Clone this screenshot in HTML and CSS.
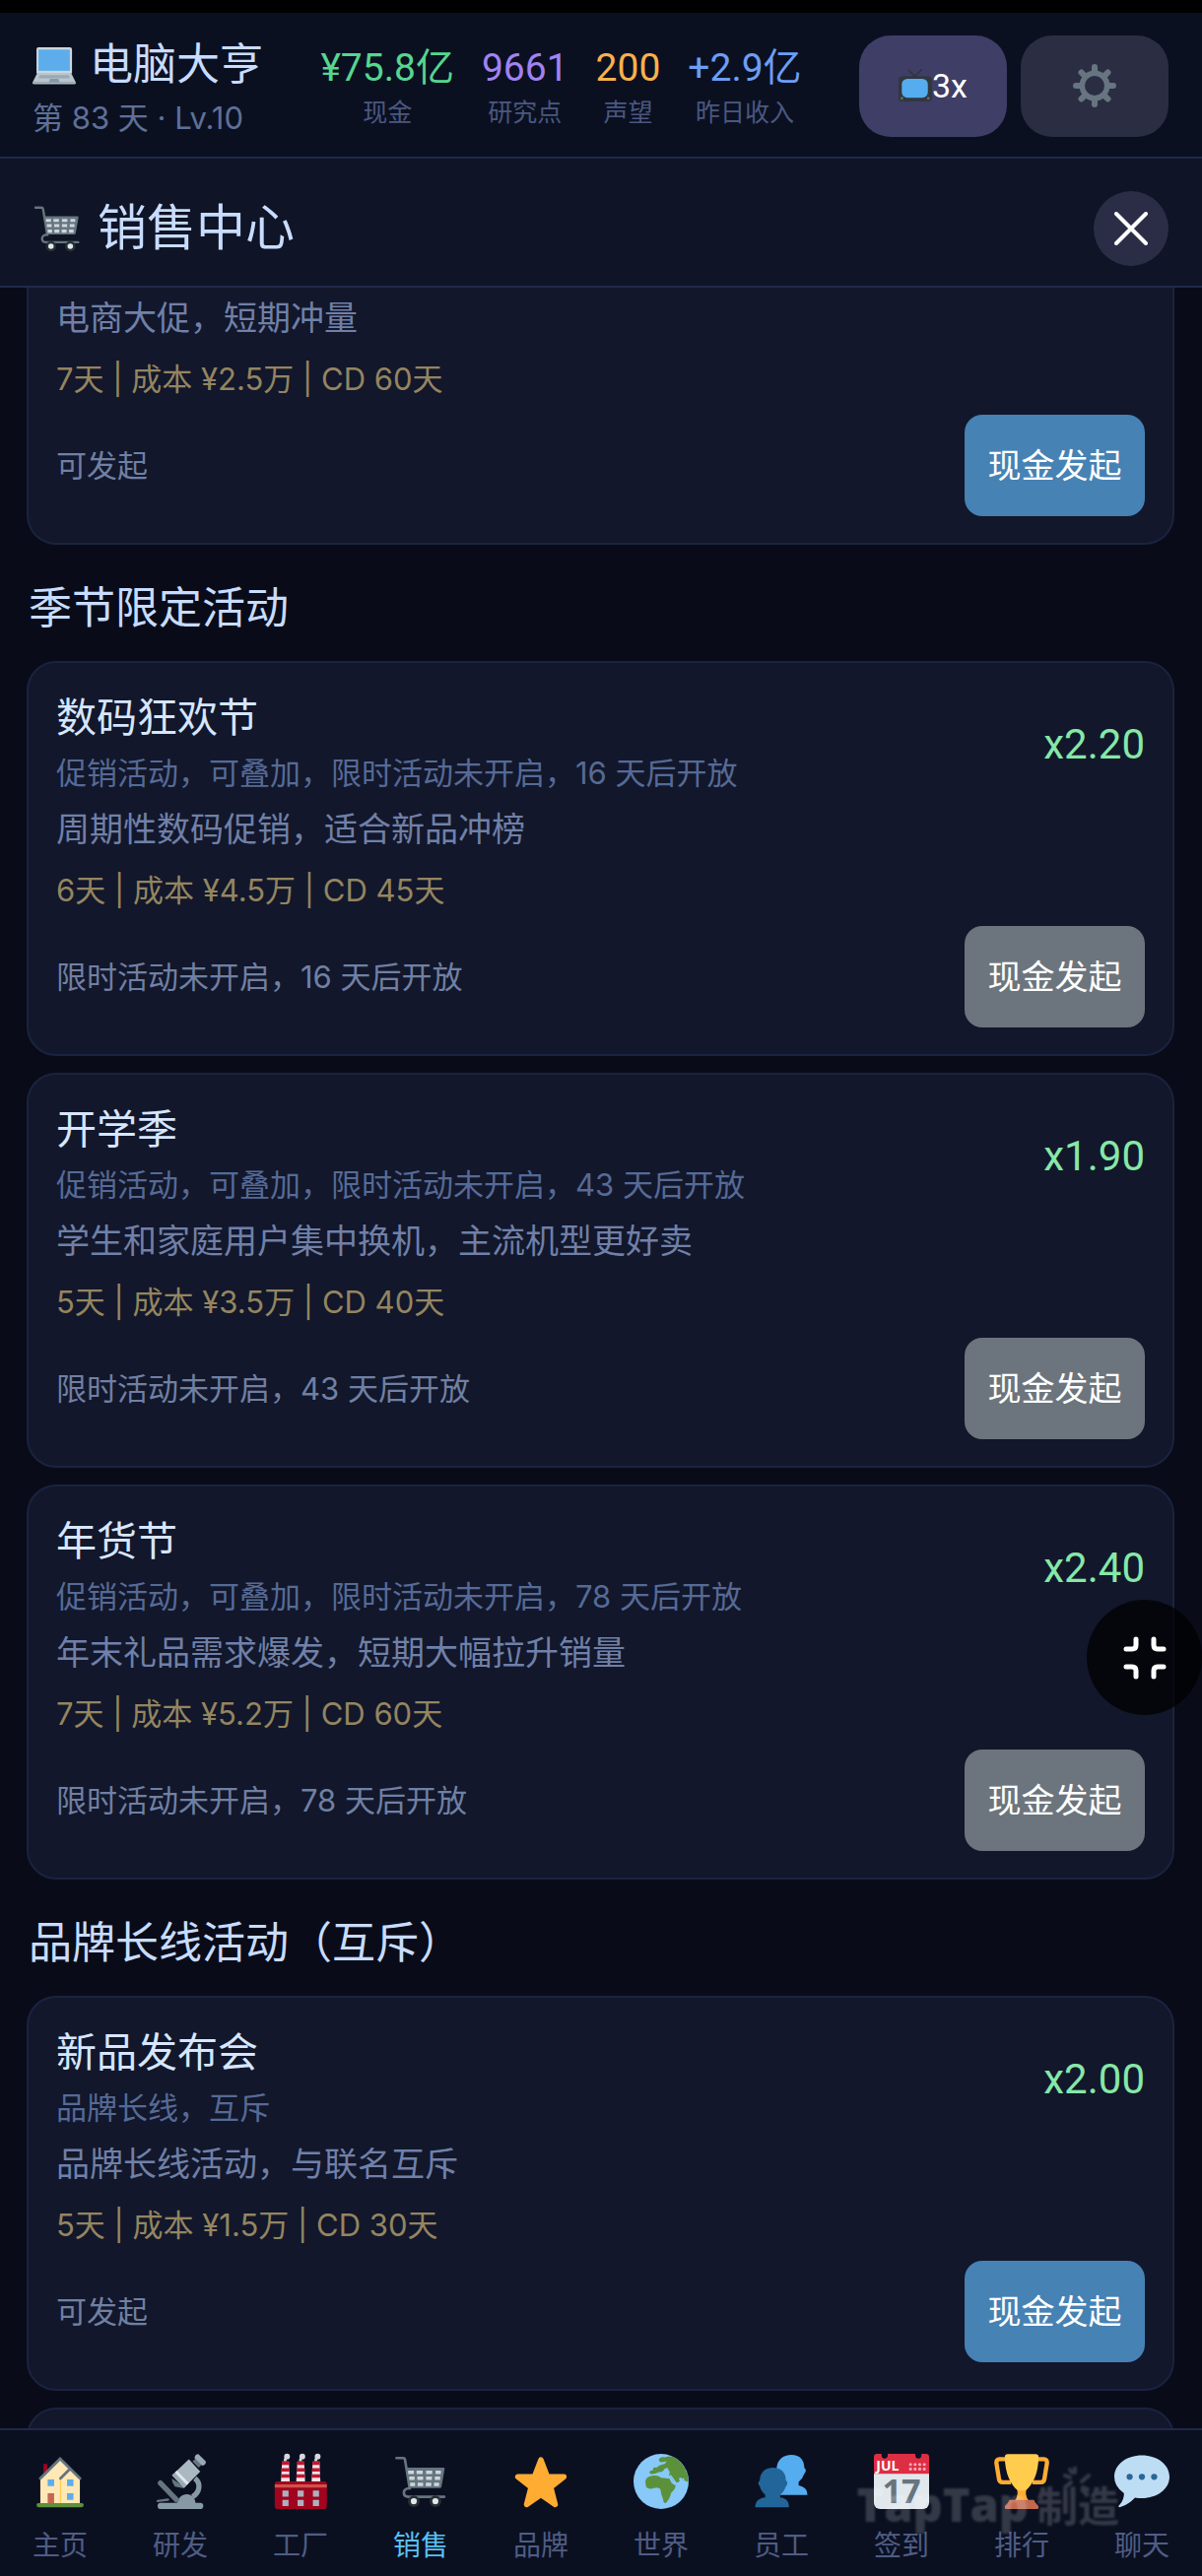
FILE: index.html
```html
<!DOCTYPE html>
<html lang="zh-CN">
<head>
  <meta charset="UTF-8">
  <meta name="viewport" content="width=device-width, initial-scale=1">
  <title>电脑大亨</title>
  <link rel="stylesheet" href="styles.css">
</head>
<body>

  <svg class="sprite" aria-hidden="true">
    <symbol id="cart" viewBox="0 0 36 36">
      <path d="M2.200 2.700H6.600Q7.500 2.700 7.700 3.600L10.800 22.500C7.500 22.500 7 24.500 7 25.300C7 27 8.200 28 10 28H33.400" fill="none" stroke="#66757f" stroke-width="1.700" stroke-linecap="round"/>
      <path d="M8.600 9H33Q33.800 9 33.600 10L31.600 21.300Q31.400 22.400 30.300 22.400H10.600Z" fill="#66757f"/>
      <path d="M9.800 12h3.700M15.300 12h4M21.500 12h4M27.700 12h3.500M10.500 15.900h3.500M15.800 15.900h3.800M21.500 15.900h3.800M27.200 15.900h3.500M11.100 19.900h3.200M16 19.900h3.600M21.300 19.900h3.600M26.700 19.900h3.300" stroke="#ccd6dd" stroke-width="2.200"/>
      <g fill="#292f33"><circle cx="13.500" cy="30.900" r="3.800"/><circle cx="27.600" cy="30.900" r="3.800"/></g>
      <g fill="#e1e8ed"><circle cx="13.500" cy="30.900" r="2"/><circle cx="27.600" cy="30.900" r="2"/></g>
    </symbol>
  </svg>

  <div class="statusbar"></div>

  <header class="topbar">
    <div class="brand">
      <div class="brand-name">
        <svg class="icon-laptop" viewBox="0 0 36 36">
          <path d="M5 3.300H31Q32.800 3.300 32.800 5V25H3.300V5Q3.300 3.300 5 3.300Z" fill="#ccd6dd"/>
          <path d="M5 5.200H31V22.800H5Z" fill="#5dadec"/>
          <path d="M4 24.500H32L36 32.500H0Z" fill="#b8c5cd"/>
          <path d="M0 32.300H36V33Q35.800 34 34.500 34H1.500Q.2 34 0 33Z" fill="#aab8c2"/>
          <path d="M6 26.300H30L31 29H5Z" fill="#9aaab4"/>
          <path d="M14.500 29.500H21.500L22.500 32.500H13.500Z" fill="#8899a6"/>
        </svg>
        <span>电脑大亨</span>
      </div>
      <div class="brand-sub">第 83 天 · Lv.10</div>
    </div>

    <div class="stats">
      <div class="stat"><b class="cash">¥75.8亿</b><span>现金</span></div>
      <div class="stat"><b class="research">9661</b><span>研究点</span></div>
      <div class="stat"><b class="fame">200</b><span>声望</span></div>
      <div class="stat"><b class="income">+2.9亿</b><span>昨日收入</span></div>
    </div>

    <div class="tools">
      <button class="tool speed" type="button">
        <svg class="icon-tv" viewBox="0 0 36 36">
          <path d="M11 1.500L17.500 8L24.500 1" fill="none" stroke="#31373d" stroke-width="2" stroke-linecap="round"/>
          <rect y="8" width="36" height="27" rx="4" fill="#31373d"/>
          <rect x="3.500" y="10.500" width="28" height="20.500" rx="6" fill="#55acee"/>
          <circle cx="3.600" cy="31.500" r="1.400" fill="#66757f"/><circle cx="32" cy="31.500" r="1.400" fill="#66757f"/>
        </svg>3x</button>
      <button class="tool" type="button" aria-label="设置">
        <svg class="icon-gear" viewBox="0 0 36 36" fill="none" stroke="#66757f">
          <circle cx="18" cy="18" r="10.400" stroke-width="4.500"/>
          <path d="M18 2.500V6M18 30v3.500M2.500 18H6M30 18h3.500M7 7l2.500 2.500M26.500 26.500L29 29M29 7l-2.500 2.500M9.500 26.500L7 29" stroke-width="5" stroke-linecap="round"/>
        </svg>
      </button>
    </div>
  </header>

  <div class="panel-head">
    <svg class="icon-cart"><use href="#cart"/></svg>
    <h1>销售中心</h1>
    <button class="close" type="button" aria-label="关闭">
      <svg viewBox="0 0 34 34"><path d="M2 2L32 32M32 2L2 32" stroke="#fff" stroke-width="4" stroke-linecap="round"/></svg>
    </button>
  </div>

  <main>
    <article class="card card-scrolled">
      <p class="desc">电商大促，短期冲量</p>
      <p class="cost">7天 | 成本 ¥2.5万 | CD 60天</p>
      <div class="action"><span>可发起</span><button class="launch" type="button">现金发起</button></div>
    </article>

    <h2>季节限定活动</h2>

    <article class="card">
      <div class="card-head">
        <div>
          <h3>数码狂欢节</h3>
          <p class="tags">促销活动，可叠加，限时活动未开启，16 天后开放</p>
        </div>
        <strong>x2.20</strong>
      </div>
      <p class="desc">周期性数码促销，适合新品冲榜</p>
      <p class="cost">6天 | 成本 ¥4.5万 | CD 45天</p>
      <div class="action"><span>限时活动未开启，16 天后开放</span><button class="launch" type="button" disabled>现金发起</button></div>
    </article>

    <article class="card">
      <div class="card-head">
        <div>
          <h3>开学季</h3>
          <p class="tags">促销活动，可叠加，限时活动未开启，43 天后开放</p>
        </div>
        <strong>x1.90</strong>
      </div>
      <p class="desc">学生和家庭用户集中换机，主流机型更好卖</p>
      <p class="cost">5天 | 成本 ¥3.5万 | CD 40天</p>
      <div class="action"><span>限时活动未开启，43 天后开放</span><button class="launch" type="button" disabled>现金发起</button></div>
    </article>

    <article class="card">
      <div class="card-head">
        <div>
          <h3>年货节</h3>
          <p class="tags">促销活动，可叠加，限时活动未开启，78 天后开放</p>
        </div>
        <strong>x2.40</strong>
      </div>
      <p class="desc">年末礼品需求爆发，短期大幅拉升销量</p>
      <p class="cost">7天 | 成本 ¥5.2万 | CD 60天</p>
      <div class="action"><span>限时活动未开启，78 天后开放</span><button class="launch" type="button" disabled>现金发起</button></div>
    </article>

    <h2>品牌长线活动（互斥）</h2>

    <article class="card">
      <div class="card-head">
        <div>
          <h3>新品发布会</h3>
          <p class="tags">品牌长线，互斥</p>
        </div>
        <strong>x2.00</strong>
      </div>
      <p class="desc">品牌长线活动，与联名互斥</p>
      <p class="cost">5天 | 成本 ¥1.5万 | CD 30天</p>
      <div class="action"><span>可发起</span><button class="launch" type="button">现金发起</button></div>
    </article>

    <article class="card"></article>
  </main>

  <nav>
    <a href="#home">
      <svg viewBox="0 0 36 36">
        <path d="M7.100 6.600H9.700V14H7.100Z" fill="#a0041e"/>
        <path d="M5.100 16L18 3L30.900 16V32.500H5.100Z" fill="#ffe8b6"/>
        <path d="M18.300 17V32" stroke="#ffcc4d" stroke-width=".8"/>
        <path d="M5.100 16.100L18 3.200L31 16.100M18.200 16.100L24.300 10" fill="none" stroke="#66757f" stroke-width="1.800" stroke-linecap="round"/>
        <path d="M9.900 16.700h4.200V21H9.900ZM22.500 16.700h4.200V21h-4.200ZM22.500 25.700h4.200V30h-4.200Z" fill="#5dadec"/>
        <path d="M9.900 25.700h4.200v6.500H9.900Z" fill="#c1694f"/>
        <rect x="2.600" y="32.100" width="30.800" height="2.700" rx="1.300" fill="#5c913b"/>
      </svg>
      <span>主页</span>
    </a>
    <a href="#research">
      <svg viewBox="0 0 36 36">
        <path d="M27.500 16C31.500 19 31 25 26 28" fill="none" stroke="#8899a6" stroke-width="3.400"/>
        <path d="M16 33C16 29 19 26.300 22.300 26.300S28 29 28 33Z" fill="#8899a6"/>
        <rect x="3.200" y="32" width="29.800" height="4" rx="2" fill="#8899a6"/>
        <path d="M5 19L15.500 30" stroke="#66757f" stroke-width="3.400" stroke-linecap="round"/>
        <path d="M3.200 30.800L10 29.900" stroke="#66757f" stroke-width="1.500" stroke-linecap="round"/>
        <path d="M12.500 16L20.500 21.500L19.500 22.300L14.500 21.300Q12.500 19 12.500 16Z" fill="#66757f"/>
        <path d="M26 5L30 9L32 7L28 3Z" fill="#66757f"/>
        <path d="M27.300 2.700Q27.600 .2 29.800 .2L34.700 5Q34.700 7.500 32.300 7.700Z" fill="#9aaab4"/>
        <path d="M23.600 3.600L31 11.600L20.400 22.300L12.600 14Z" fill="#aab8c2"/>
        <path d="M12.600 14L14 12.600L21.800 20.800L20.400 22.300Z" fill="#99aab5"/>
        <path d="M14.500 12.100L15.800 10.900L23.600 19L22.300 20.300Z" fill="#e1e8ed"/>
      </svg>
      <span>研发</span>
    </a>
    <a href="#factory">
      <svg viewBox="0 0 36 36">
        <g fill="#f5dfe4"><path d="M6 5H10.400L11 18.500H5.200ZM16 5H20.400L21 18.500H15.200ZM26 5H30.400L31 18.500H25.200Z"/></g>
        <path d="M5.800 6.200h4.800M15.800 6.200h4.800M25.800 6.200h4.800M5.500 10.400h5.300M15.500 10.400h5.300M25.500 10.400h5.300M5.300 14.500h5.600M15.300 14.500h5.600M25.300 14.500h5.600" stroke="#be1931" stroke-width="2.200"/>
        <g fill="#d5d9de"><circle cx="9.200" cy="1.800" r="1.900"/><circle cx="8" cy="3.800" r="1"/><circle cx="19.200" cy="1.800" r="1.900"/><circle cx="18" cy="3.800" r="1"/><circle cx="29.200" cy="1.800" r="1.900"/><circle cx="28" cy="3.800" r="1"/></g>
        <rect x="1.200" y="18" width="34" height="18" rx="2" fill="#a0041e"/>
        <path d="M1.200 20H35.200V22H1.200Z" fill="#d1514a"/>
        <path d="M6.200 24H10.200V28H6.200ZM16.100 24h4v4h-4ZM26.100 24h4v4h-4ZM6.200 30H10.200V34H6.200ZM16.100 30h4v4h-4ZM26.100 30h4v4h-4Z" fill="#aeb0bf"/>
      </svg>
      <span>工厂</span>
    </a>
    <a href="#sales" class="active">
      <svg><use href="#cart"/></svg>
      <span>销售</span>
    </a>
    <a href="#brand">
      <svg viewBox="0 0 36 36">
        <path d="M18 4L22.200 15H33L24.400 21.800L27.300 33L18 26.600L8.700 33L11.600 21.800L3 15H13.800Z" fill="#ffac33" stroke="#ffac33" stroke-width="3.600" stroke-linejoin="round"/>
      </svg>
      <span>品牌</span>
    </a>
    <a href="#world">
      <svg viewBox="0 0 36 36">
        <circle cx="18" cy="18" r="18" fill="#88c9f9"/>
        <path d="M7.700 17.800Q8.500 14.800 11 14.600Q14 13.700 16.800 14.800Q18 16 20 15.800L23.500 16.200Q24.500 19 26 20L27.500 20.500Q27.300 23 24.500 25.500Q24 29 21 32.100Q19.500 32.300 19.300 29.500Q17.800 26 17.500 23Q16 21.500 13.500 22.300Q10 23.500 8.200 21.500Z" fill="#5c913b"/>
        <path d="M16.500 3.500Q17.500 1.800 20.500 2.200Q25 .8 28 3Q35.500 8.500 35.900 18.500Q33 18 31 15.500L29.500 16Q31 18 28.500 19.300Q26.500 19 24.500 15.500Q22.500 13.800 23.700 12L22 9L20 10Q19.500 12 17 11.800Q14 13.500 11 13Q9 11.500 13 10.500Q12 8.500 15 9L17 7.500L20.500 6.500L21.500 4.800L18.500 5.500Q16.500 5.500 16.500 3.500Z" fill="#5c913b"/>
        <path d="M24 14L28 19.500Q31 18.500 33 16" fill="none" stroke="#88c9f9" stroke-width="1"/>
      </svg>
      <span>世界</span>
    </a>
    <a href="#staff">
      <svg viewBox="0 0 36 36">
        <path d="M24.700 .7C30 .7 33 4 33 9Q35 10.800 33 13Q31.800 16.500 29.300 18.300V20.500C33.500 21.500 35 23.500 35 26.800H15V9C15.500 4 19 .7 24.700 .7Z" fill="#55acee"/>
        <path d="M12.500 9C18 9 21 12.300 21 17.300Q23 19 21 21.200Q19.800 24.800 17.300 26.600V28.500C21.500 29 23 31.300 23 34.800H1C1 31.300 3 29 7.500 28.500V26.600Q5 24.800 4 21.200Q2 19 4 17.300C4 12.300 7.500 9 12.500 9Z" fill="#269"/>
      </svg>
      <span>员工</span>
    </a>
    <a href="#signin">
      <svg viewBox="0 0 36 36">
        <rect width="36" height="36" rx="4" fill="#e1e8ed"/>
        <path d="M2 0H34Q36 0 36 2V13H0V2Q0 0 2 0Z" fill="#dd2e44"/>
        <path d="M5 0H9V1A2 2 0 0 1 5 1ZM27 0H31V1A2 2 0 0 1 27 1Z" fill="#0b1021"/>
        <g fill="#f4abba"><circle cx="23.900" cy="6.900" r="1"/><circle cx="26.900" cy="6.900" r="1"/><circle cx="29.900" cy="6.900" r="1"/><circle cx="32.900" cy="6.900" r="1"/><circle cx="23.900" cy="9.900" r="1"/><circle cx="26.900" cy="9.900" r="1"/><circle cx="29.900" cy="9.900" r="1"/><circle cx="32.900" cy="9.900" r="1"/></g>
        <text x="1.500" y="11" class="cal-month">JUL</text>
        <text x="18" y="32" class="cal-day">17</text>
      </svg>
      <span>签到</span>
    </a>
    <a href="#rank">
      <svg viewBox="0 0 36 36">
        <path d="M8 3.500H3.500Q1.400 3.500 1.500 6L3.200 16.500Q3.500 18.600 5.500 18.600H11M28 3.500H32.500Q34.600 3.500 34.500 6L32.800 16.500Q32.500 18.600 30.500 18.600H25" fill="none" stroke="#ffac33" stroke-width="2.800"/>
        <path d="M15 22H21L20.700 26Q21 29 23 31H13Q15 29 15.300 26Z" fill="#ffac33"/>
        <path d="M7 2Q7 .2 9 .2H27Q29 .2 29 2C29 13 25 20.500 20.500 24H15.500C11 20.500 7 13 7 2Z" fill="#ffcc4d"/>
        <path d="M10 30H26Q27 32.500 29 34V35Q29 36 28 36H8Q7 36 7 35V34Q9 32.500 10 30Z" fill="#c1694f"/>
      </svg>
      <span>排行</span>
    </a>
    <a href="#chat">
      <svg viewBox="0 0 36 36">
        <path d="M18 1C28 1 36 7 36 15S28 29 18 29Q15.500 29 13.500 28.600Q9 33.500 3.500 34.800Q2.300 34.800 3 33.700Q6.500 30 6.300 25.700Q0 21.500 0 15C0 7 8 1 18 1Z" fill="#bdddf4"/>
        <g fill="#2a6797"><circle cx="10" cy="15" r="2"/><circle cx="18" cy="15" r="2"/><circle cx="26" cy="15" r="2"/></g>
      </svg>
      <span>聊天</span>
    </a>
    <div class="watermark">
      <span>TapTap</span><span class="watermark-cn">制造</span>
      <svg viewBox="0 0 30 26"><path d="M13 1v5M3 9l5 2M8 3l2 3M27 9l-7 6M3 21l6-5M21 21l5 2" stroke="currentColor" stroke-width="4" stroke-linecap="round"/></svg>
    </div>
  </nav>

  <button class="fab" type="button" aria-label="退出全屏">
    <svg viewBox="0 0 44 44" fill="none" stroke="#fff" stroke-width="5" stroke-linecap="round"><path d="M13 3V9Q13 13 9 13H3M31 3V9Q31 13 35 13H41M3 31H9Q13 31 13 35V41M41 31H35Q31 31 31 35V41"/></svg>
  </button>

</body>
</html>
```

FILE: styles.css
```css
* {
  box-sizing: border-box;
}
body {
  margin: 0;
  height: 100vh;
  display: flex;
  flex-direction: column;
  background: #090c18;
  color: #c8dcff;
  font-family: Roboto, "Noto Sans CJK SC", sans-serif;
  overflow: hidden;
}
h1, h2, h3, p {
  margin: 0;
  font-weight: 400;
}
button {
  border: 0;
  padding: 0;
  color: #fff;
  font-family: inherit;
  font-size: 34px;
  line-height: 40px;
  display: flex;
  align-items: center;
  justify-content: center;
}
.sprite {
  display: none;
}
.statusbar {
  flex: none;
  height: 13px;
  background: #000;
}

/* top bar */
.topbar {
  flex: none;
  display: flex;
  align-items: center;
  padding: 22px 34px 20px 33px;
  background: #0b1021;
  border-bottom: 2px solid #1f2847;
}
.brand {
  padding-top: 8px;
}
.brand-name {
  display: flex;
  align-items: center;
  gap: 14px;
  margin-bottom: 12px;
  font-size: 44px;
  line-height: 46px;
}
.icon-laptop {
  width: 44px;
  height: 44px;
}
.brand-sub,
.tags,
.cost,
.action span {
  font-family: Inter, "Noto Sans CJK SC", sans-serif;
  font-size: 31px;
}
.brand-sub {
  line-height: 38px;
  color: #5f7098;
}
.stats {
  flex: 1;
  display: flex;
  justify-content: center;
  gap: 28px;
  padding-top: 5px;
}
.stat {
  text-align: center;
}
.stat b {
  display: block;
  font-size: 39px;
  font-weight: 400;
  line-height: 50px;
}
.stat span {
  display: block;
  font-size: 25px;
  line-height: 42px;
  color: #4a5880;
}
.cash { color: #56d68f; }
.research { color: #a083f2; }
.fame { color: #fbb04c; }
.income { color: #6b9ef5; }
.tools {
  display: flex;
  gap: 14px;
}
.tool {
  width: 150px;
  height: 103px;
  border-radius: 32px;
  background: #2b2d43;
}
.speed {
  background: #3f3e66;
}
.icon-tv {
  width: 34px;
  height: 34px;
}
.icon-gear {
  width: 44px;
  height: 44px;
}

/* panel title */
.panel-head {
  flex: none;
  display: flex;
  align-items: center;
  gap: 16px;
  padding: 33px 34px 20px 33px;
  background: #0f1426;
  border-bottom: 2px solid #212a49;
}
.panel-head h1 {
  flex: 1;
  font-size: 50px;
  line-height: 60px;
}
.icon-cart {
  width: 50px;
  height: 50px;
}
.close {
  width: 76px;
  height: 76px;
  border-radius: 50%;
  background: #2b2d47;
}
.close svg {
  width: 34px;
  height: 34px;
}

/* campaign list */
main {
  flex: 1;
  min-height: 0;
  overflow: hidden;
  padding: 0 28px 0 27px;
}
h2 {
  margin: 35px 2px 23px;
  font-size: 44px;
  line-height: 60px;
}
.card {
  min-height: 60px;
  padding: 26px 28px 27px;
  background: #12172b;
  border: 2px solid #1a2340;
  border-radius: 30px;
}
.card + .card {
  margin-top: 17px;
}
.card-scrolled {
  padding-top: 0;
  border-top: 0;
  border-radius: 0 0 30px 30px;
}
.card-head {
  display: flex;
  align-items: center;
  justify-content: space-between;
}
.card h3 {
  font-size: 41px;
  line-height: 60px;
  color: #d6e6ff;
}
.card strong {
  font-size: 42px;
  font-weight: 400;
  color: #86e8a8;
}
.card .tags {
  line-height: 52px;
  color: #566a96;
}
.desc {
  font-size: 34px;
  line-height: 62px;
  color: #7080a8;
}
.cost {
  margin-bottom: 5px;
  line-height: 62px;
  color: #948560;
}
.action {
  display: flex;
  align-items: center;
  justify-content: space-between;
  line-height: 40px;
  color: #7080a4;
}
.launch {
  width: 183px;
  height: 103px;
  border-radius: 18px;
  background: #4682b4;
}
.launch:disabled {
  background: #6c757d;
}

/* bottom navigation */
nav {
  flex: none;
  position: relative;
  display: grid;
  grid-template-columns: repeat(10, 1fr);
  height: 150px;
  padding-top: 24px;
  background: #0b1021;
  border-top: 2px solid #1f2847;
}
nav a {
  display: flex;
  flex-direction: column;
  align-items: center;
  gap: 18px;
  color: #4f5d84;
  font-size: 28px;
  line-height: 40px;
  text-decoration: none;
}
nav a.active {
  color: #5ac0f5;
}
nav a svg {
  width: 56px;
  height: 56px;
  overflow: visible;
}
.cal-month {
  font: 700 9px "Open Sans", sans-serif;
  fill: #fff;
}
.cal-day {
  font: 700 22px "Open Sans", sans-serif;
  fill: #66757f;
  text-anchor: middle;
}
.watermark {
  position: absolute;
  right: 84px;
  top: 45px;
  display: flex;
  align-items: center;
  gap: 8px;
  font: 800 47px/60px "Open Sans", sans-serif;
  color: #fff;
  opacity: .17;
  filter: blur(1px);
  pointer-events: none;
}
.watermark-cn {
  font: 700 42px/60px "Noto Sans CJK SC", sans-serif;
}
.watermark svg {
  position: absolute;
  right: 28px;
  top: -8px;
  width: 30px;
  height: 26px;
}

/* floating button over the list */
.fab {
  position: fixed;
  right: 0;
  top: 1624px;
  width: 117px;
  height: 117px;
  border-radius: 50%;
  background: rgba(0, 0, 0, .7);
}
.fab svg {
  width: 44px;
  height: 44px;
}
```
